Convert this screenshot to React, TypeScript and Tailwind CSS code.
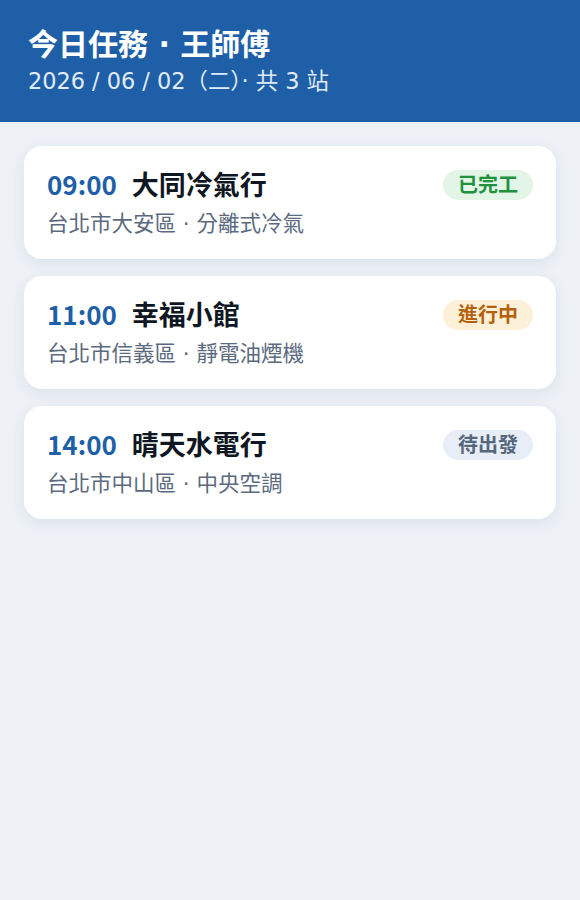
const jobs = [
  { time: "09:00", name: "大同冷氣行", addr: "台北市大安區 · 分離式冷氣", status: "已完工", badge: "bg-[#e2f5e7] text-[#22913e]" },
  { time: "11:00", name: "幸福小館", addr: "台北市信義區 · 靜電油煙機", status: "進行中", badge: "bg-[#fdf0d8] text-[#b4610a]" },
  { time: "14:00", name: "晴天水電行", addr: "台北市中山區 · 中央空調", status: "待出發", badge: "bg-[#e7eef8] text-[#56667b]" },
];

function JobCard({ job }: { job: (typeof jobs)[number] }) {
  return (
    <div className="bg-white rounded-[18px] px-[23px] pt-[21px] pb-[20px] shadow-[0_4px_14px_rgba(30,60,110,0.08)]">
      <div className="flex items-center justify-between h-[36px]">
        <div className="flex items-baseline gap-[15px]">
          <span className="font-['Noto_Sans_CJK_TC',sans-serif] text-[26px] font-bold text-[#1e5fa8]">{job.time}</span>
          <span className="text-[27px] font-bold text-[#0f1722]">{job.name}</span>
        </div>
        <span className={"rounded-full px-[15px] h-[30px] flex items-center text-[20px] font-bold " + job.badge}>
          {job.status}
        </span>
      </div>
      <div className="mt-[6px] text-[21.5px] text-[#5b6a7e] leading-[30px]">{job.addr}</div>
    </div>
  );
}

export default function App() {
  return (
    <div className="min-h-[900px] bg-[#edf1f6] font-['DejaVu_Sans','Noto_Sans_CJK_TC',sans-serif]">
      <div className="bg-[#1e5fa8] h-[122px] px-[28px] pt-[25px]">
        <div className="text-white text-[30px] font-bold leading-[40px]">今日任務 · 王師傅</div>
        <div className="text-[#e1ebf7] text-[22.4px] leading-[30px] mt-[1px]">2026 / 06 / 02（二）· 共 3 站</div>
      </div>
      <div className="px-[24px] pt-[24px] flex flex-col gap-[17px]">
        {jobs.map((j) => (
          <JobCard key={j.time} job={j} />
        ))}
      </div>
    </div>
  );
}
